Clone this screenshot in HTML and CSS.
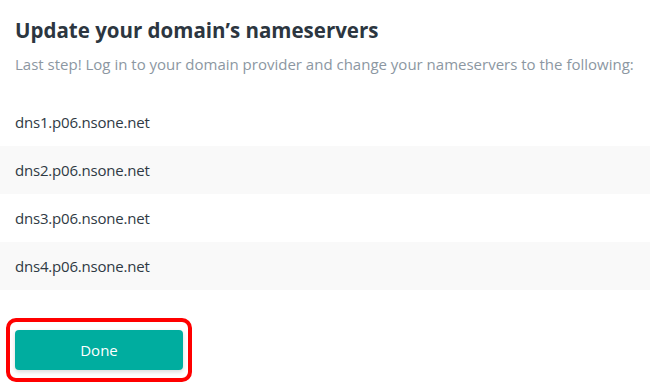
FILE: index.html
```html
<!DOCTYPE html>
<html lang="en">
<head>
  <meta charset="UTF-8" />
  <title>Update nameservers</title>
  <link rel="stylesheet" href="styles.css">
</head>
<body>
  <div class="panel">
    <h2 class="title">Update your domain’s nameservers</h2>
    <p class="lead">Last step! Log in to your domain provider and change your nameservers to the following:</p>

    <ul class="ns-list">
      <li class="ns-row">dns1.p06.nsone.net</li>
      <li class="ns-row">dns2.p06.nsone.net</li>
      <li class="ns-row">dns3.p06.nsone.net</li>
      <li class="ns-row">dns4.p06.nsone.net</li>
    </ul>

    <div class="highlight">
      <button class="btn-done">Done</button>
    </div>
  </div>
</body>
</html>
```

FILE: styles.css
```css
* {
  box-sizing: border-box;
  margin: 0;
  padding: 0;
}
body {
  font-family: 'Open Sans', 'Noto Sans', sans-serif;
  background: #fff;
  color: #333;
}
.panel {
  padding: 14px 0 0;
}
.title {
  font-size: 20.5px;
  font-weight: 700;
  color: #2c3640;
  padding: 0 15px;
  line-height: 32px;
}
.lead {
  font-size: 15px;
  color: #8c97a2;
  padding: 0 15px;
  margin-top: 5px;
  line-height: 26px;
}
.ns-list {
  list-style: none;
  margin-top: 21px;
}
.ns-row {
  height: 48px;
  line-height: 48px;
  padding: 0 15px;
  font-size: 15px;
  color: #2f3a44;
  letter-spacing: -0.2px;
}
.ns-row:nth-child(even) {
  background: #f9f9f9;
}
.highlight {
  display: inline-block;
  margin: 28px 0 0 6px;
  padding: 8px 5px;
  border: 4px solid #ff0000;
  border-radius: 10px;
}
.btn-done {
  display: block;
  width: 168px;
  height: 40px;
  background: #00ad9f;
  color: #fff;
  border: none;
  border-radius: 4px;
  font-family: inherit;
  font-size: 15px;
  box-shadow: 0 2px 4px rgba(0, 0, 0, 0.15);
}
```
